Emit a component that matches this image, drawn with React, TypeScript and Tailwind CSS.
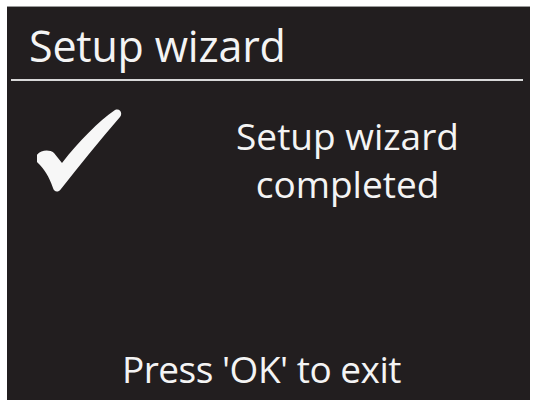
export default function App() {
  return (
    <div className="w-[535px] h-[404px] bg-white pt-[6px] pl-[7px]">
      <div
        className="w-[523px] h-[394px] bg-[#221e1f] border-t border-[#9a9a9a] flex flex-col text-[#f4f4f4]"
        style={{ fontFamily: '"Open Sans", "Noto Sans", sans-serif' }}
      >
        {/* title bar */}
        <div className="h-[72px] pl-[22px] pt-[17px]">
          <h1 className="text-[43px] leading-[43px] tracking-[-0.2px]">Setup wizard</h1>
        </div>
        <div className="h-[2px] bg-[#d8d8d8] ml-[4px] mr-[7px]" />

        {/* body */}
        <div className="flex flex-row pt-[26px]">
          <div className="w-[130px] pl-[30px] pt-[2px]">
            <svg width="86" height="84" viewBox="38 108 86 84">
              <path
                d="M37,155 C41,149 50,148 55,152 L63,162 C80,140 100,120 116,109 C121,107 124,112 121,116 C100,140 80,165 62,188 C59,192 55,191 54,187 C50,175 45,168 40,163 C37,160 35,158 37,155 Z"
                fill="#f7f7f7"
              />
            </svg>
          </div>
          <div className="flex-1 text-center pl-[28px] pt-[5px] text-[37px] leading-[48px]">
            <p>Setup wizard</p>
            <p>completed</p>
          </div>
        </div>

        {/* footer */}
        <div className="mt-auto pb-[7px] pr-[14px] text-center text-[37px] leading-[48px] tracking-[-0.5px]">
          Press 'OK' to exit
        </div>
      </div>
    </div>
  );
}
